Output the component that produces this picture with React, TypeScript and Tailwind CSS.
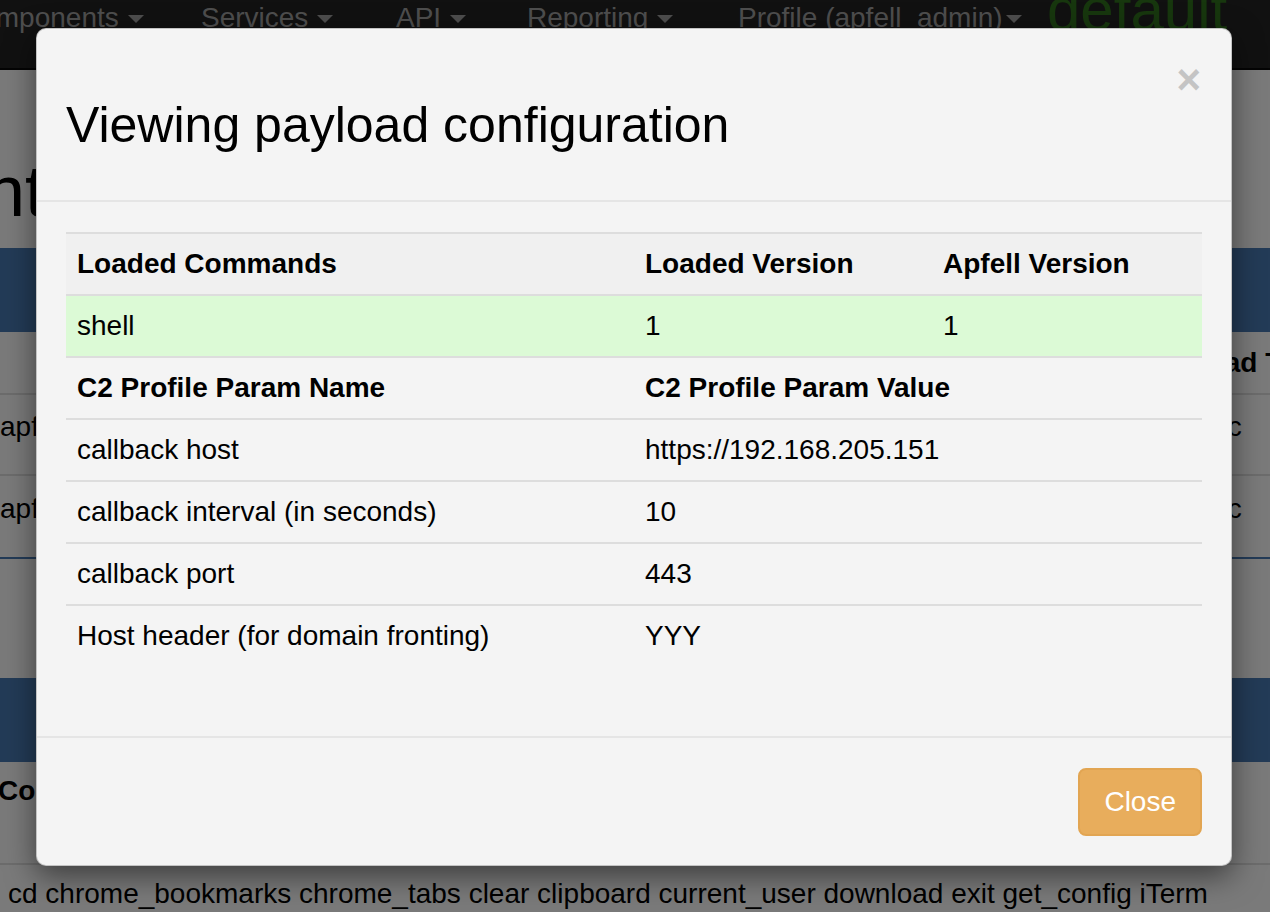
import React from 'react';

function Caret({ tight }: { tight?: boolean }) {
    return (
        <span className={(tight ? "ml-[3px]" : "ml-[9px]") + " mt-[2px] inline-block h-0 w-0 border-x-[8px] border-t-[8px] border-x-transparent border-t-[#9d9d9d]"} />
    );
}

const navItems = [
    { label: "Components", width: "w-[241px] -ml-[40px]" },
    { label: "Services", width: "w-[195px]" },
    { label: "API", width: "w-[131px]" },
    { label: "Reporting", width: "w-[211px]" },
    { label: "Profile (apfell_admin)", width: "w-[309px]", tight: true },
];

// only the strips left and right of the modal show, so cells are clipped to them
function EdgeRow({ left, right, className }: { left?: string; right?: string; className: string }) {
    return (
        <div className={"flex whitespace-nowrap text-[28px] leading-[40px] " + className}>
            <div className="w-[40px] shrink-0 overflow-hidden">{left}</div>
            <div className="ml-auto w-[40px] shrink-0 overflow-hidden">
                <div className="-ml-[80px]">{right}</div>
            </div>
        </div>
    );
}

// the page that sits behind the modal backdrop
function Background() {
    return (
        <div className="w-full">
            <div className="flex h-[70px] items-start overflow-hidden whitespace-nowrap border-b-2 border-[#080808] bg-[#222222]">
                {navItems.map((item) => (
                    <div key={item.label} className={item.width + " mt-[1px] flex h-[34px] shrink-0 items-center text-[28px] leading-[34px] text-[#9d9d9d]"}>
                        {item.label}
                        <Caret tight={item.tight} />
                    </div>
                ))}
                <div className="-mt-[20px] shrink-0 text-[60px] leading-[60px] text-[#2f6e1c]">default</div>
            </div>

            <div className="h-[178px] pt-[81px]">
                <div className="flex w-[45px] justify-end overflow-hidden">
                    <h1 className="shrink-0 whitespace-nowrap text-[72px] font-normal leading-[80px]">Payload Management</h1>
                </div>
            </div>

            <div className="h-[84px] bg-[#4676ae]" />

            <EdgeRow right="Payload Type" className="h-[63px] border-b-2 border-[#d9d9d9] pt-[11px] font-bold" />
            <EdgeRow left="apfell_admin" right="generic" className="h-[81px] border-b-2 border-[#d9d9d9] pt-[12px]" />
            <EdgeRow left="apfell_admin" right="generic" className="h-[83px] border-b-2 border-[#4676ae] pt-[13px]" />

            <div className="h-[119px]" />
            <div className="h-[84px] bg-[#4676ae]" />

            <div className="h-[103px] whitespace-nowrap border-b-2 border-[#d9d9d9] pt-[9px] text-[28px] font-bold leading-[40px]">
                <div className="w-[40px] overflow-hidden">
                    <div className="-ml-[2px]">Commands</div>
                </div>
            </div>
            <div className="whitespace-nowrap pl-[8px] pt-[9px] text-[28px] leading-[40px]">
                cd chrome_bookmarks chrome_tabs clear clipboard current_user download exit get_config iTerm
            </div>
        </div>
    );
}

const params = [
    ["callback host", "https://192.168.205.151"],
    ["callback interval (in seconds)", "10"],
    ["callback port", "443"],
    ["Host header (for domain fronting)", "YYY"],
];

const cell = "whitespace-nowrap border-t-2 border-[#dddddd] px-[11px] py-[10px] text-left align-top text-[28px] leading-[40px]";

export default function App() {
    return (
        <div className="relative h-[912px] overflow-hidden bg-[#f4f4f4] font-['Liberation_Sans',Arial,sans-serif] text-black">
            <Background />

            <div className="absolute inset-0 bg-black/50">
                <div className="ml-[36px] mt-[28px] w-[1196px] rounded-[10px] border border-black/20 bg-[#f4f4f4] shadow-[0_10px_30px_rgba(0,0,0,0.5)]">
                    <div className="relative border-b-2 border-[#e5e5e5] px-[29px] pb-[27px] pt-[29px]">
                        <button className="absolute right-[30px] top-[30px] text-[42px] font-bold leading-[42px] text-[#c4c4c4]">×</button>
                        <h4 className="mb-[20px] mt-[40px] text-[50px] font-normal leading-[55px]">Viewing payload configuration</h4>
                    </div>

                    <div className="px-[29px] pb-[30px] pt-[30px]">
                        <table className="mb-[40px] w-full table-fixed border-separate border-spacing-0">
                            <colgroup>
                                <col className="w-[568px]" />
                                <col className="w-[298px]" />
                                <col />
                            </colgroup>
                            <thead>
                                <tr className="bg-[#f0f0f0] font-bold">
                                    <th className={cell}>Loaded Commands</th>
                                    <th className={cell}>Loaded Version</th>
                                    <th className={cell}>Apfell Version</th>
                                </tr>
                            </thead>
                            <tbody>
                                <tr className="bg-[#dcfad6]">
                                    <td className={cell}>shell</td>
                                    <td className={cell}>1</td>
                                    <td className={cell}>1</td>
                                </tr>
                                <tr className="font-bold">
                                    <td className={cell}>C2 Profile Param Name</td>
                                    <td className={cell + " overflow-visible"}>C2 Profile Param Value</td>
                                    <td className={cell}></td>
                                </tr>
                                {params.map(([name, value]) => (
                                    <tr key={name}>
                                        <td className={cell}>{name}</td>
                                        <td className={cell}>{value}</td>
                                        <td className={cell}></td>
                                    </tr>
                                ))}
                            </tbody>
                        </table>
                    </div>

                    <div className="flex justify-end border-t-2 border-[#e5e5e5] px-[29px] pb-[29px] pt-[30px]">
                        <button className="rounded-[8px] border-2 border-[#e2a552] bg-[#e8ad5c] px-[24px] py-[12px] text-[28px] leading-[40px] text-white">
                            Close
                        </button>
                    </div>
                </div>
            </div>
        </div>
    );
}
